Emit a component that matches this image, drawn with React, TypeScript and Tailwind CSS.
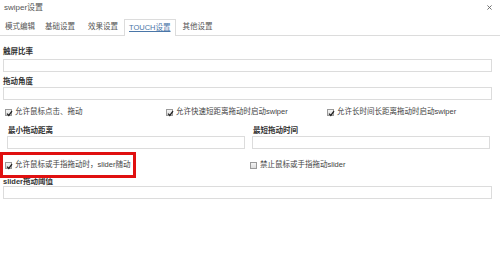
const font = { fontFamily: '"Liberation Sans", "Noto Sans CJK SC", sans-serif' };

const Check = ({ on }: { on: boolean }) => (
  <span className="relative inline-block w-[7px] h-[7px] border border-[#9a9a9a] bg-gradient-to-b from-[#f4f4f4] to-[#dcdcdc] shrink-0">
    {on && (
      <svg viewBox="0 0 7 7" className="absolute left-0 top-0 w-[7px] h-[7px]">
        <path d="M1 3.6 L2.8 5.4 L6 1.2" fill="none" stroke="#222" strokeWidth="1.3" />
      </svg>
    )}
  </span>
);

const CheckItem = ({ on, text, w }: { on: boolean; text: string; w?: string }) => (
  <div className={`flex items-center gap-[3px] h-[12px] ${w ?? ""}`}>
    <Check on={on} />
    <span className="text-[7.5px] text-[#444] leading-[12px] whitespace-nowrap">{text}</span>
  </div>
);

const Field = () => <div className="h-[13px] border border-[#dcdcdc] bg-white" />;

const tabs = ["模式编辑", "基础设置", "效果设置", "TOUCH设置", "其他设置"];

export default function App() {
  return (
    <div className="w-[500px] h-[266px] bg-white overflow-hidden text-[#333]" style={font}>
      {/* header */}
      <div className="flex justify-between items-center h-[15px] pl-[4px] pr-[8px]">
        <span className="text-[8px] text-[#555] leading-[15px]">swiper设置</span>
        <svg viewBox="0 0 6 6" className="w-[5px] h-[5px]">
          <path d="M0.5 0.5 L5.5 5.5 M5.5 0.5 L0.5 5.5" stroke="#666" strokeWidth="1.1" />
        </svg>
      </div>

      {/* tabs */}
      <div className="flex items-end mt-[4px] h-[17px] border-b border-[#dcdcdc]">
        {tabs.map((t, i) => (
          <div
            key={t}
            className={
              i === 3
                ? "h-[17px] px-[4px] border border-b-0 border-[#dcdcdc] bg-white -mb-px text-[7.5px] leading-[16px] text-[#4a76a8] underline"
                : `h-[16px] px-[5px] text-[7.5px] leading-[16px] text-[#555] ${i === 2 ? "ml-[3px] mr-[1px]" : ""} ${i === 4 ? "ml-[2px]" : ""}`
            }
          >
            {t}
          </div>
        ))}
      </div>

      <div className="pl-[3px] pr-[8px]">
        <div className="mt-[10px] h-[12px] text-[7.5px] font-bold leading-[12px]">触屏比率</div>
        <div className="mt-[1px]"><Field /></div>

        <div className="mt-[5px] h-[10px] text-[7.5px] font-bold leading-[10px]">拖动角度</div>
        <Field />
      </div>

      <div className="flex mt-[6px] pl-[5px]">
        <CheckItem on text="允许鼠标点击、拖动" w="w-[161px]" />
        <CheckItem on text="允许快速短距离拖动时启动swiper" w="w-[161px]" />
        <CheckItem on text="允许长时间长距离拖动时启动swiper" />
      </div>

      <div className="flex gap-[7px] pl-[7px] pr-[10px] mt-[8px]">
        <div className="flex-1">
          <div className="h-[10px] text-[7.5px] font-bold leading-[10px] pl-[1px]">最小拖动距离</div>
          <Field />
        </div>
        <div className="flex-1">
          <div className="h-[10px] text-[7.5px] font-bold leading-[10px] pl-[1px]">最短拖动时间</div>
          <Field />
        </div>
      </div>

      <div className="relative flex mt-[10px] pl-[5px]">
        <CheckItem on text="允许鼠标或手指拖动时，slider随动" w="w-[245px]" />
        <CheckItem on={false} text="禁止鼠标或手指拖动slider" />
      </div>

      <div className="pl-[3px] pr-[8px]">
        <div className="mt-[6px] h-[9px] text-[7.5px] font-bold leading-[9px]">slider拖动阈值</div>
        <Field />
      </div>

      {/* annotation box */}
      <div className="absolute left-[0px] top-[152px] w-[136px] h-[26px] border-[3px] border-[#e01010]" />
    </div>
  );
}
